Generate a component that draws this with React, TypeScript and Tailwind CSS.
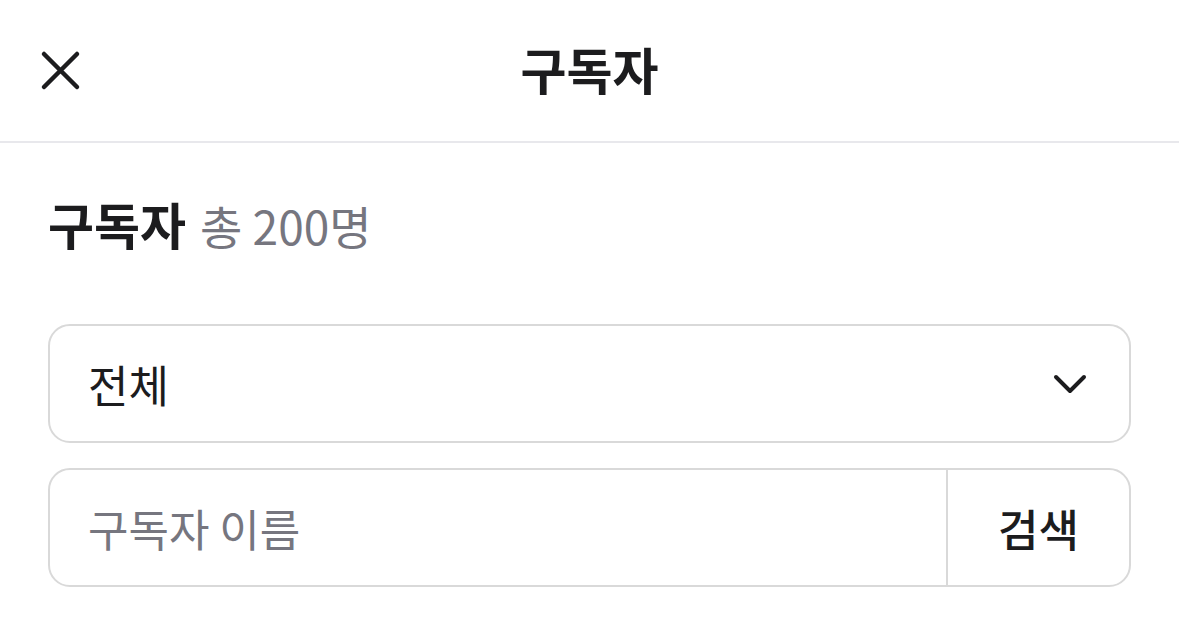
export default function App() {
  return (
    <div
      className="w-[1179px] h-[641px] bg-white text-[#1c1c1e]"
      style={{ fontFamily: '"Noto Sans CJK KR", "Noto Sans", sans-serif' }}
    >
      <header className="grid grid-cols-[1fr_auto_1fr] items-center h-[143px] border-b-[2px] border-[#e8e8ec]">
        <div className="pl-[40px] flex items-center">
          <svg width="41" height="41" viewBox="0 0 41 41" fill="none">
            <path
              d="M4 4L37 37M37 4L4 37"
              stroke="#1c1c1e"
              strokeWidth="4.5"
              strokeLinecap="round"
            />
          </svg>
        </div>
        <h1 className="text-[50px] font-bold leading-none -mt-[6px]">구독자</h1>
        <div />
      </header>

      <div className="px-[48px]">
        <div className="pt-[48px] flex items-baseline gap-[14px] leading-[64px]">
          <span className="text-[50px] font-bold">구독자</span>
          <span className="text-[46px] text-[#76767f]">총 200명</span>
        </div>

        <div className="mt-[67px] h-[119px] flex items-center justify-between rounded-[22px] border-[2px] border-[#d9d9d9] pl-[38px] pr-[42px]">
          <span className="text-[44px] leading-none">전체</span>
          <svg width="34" height="20" viewBox="0 0 34 20" fill="none">
            <path
              d="M3 3L17 17L31 3"
              stroke="#1c1c1e"
              strokeWidth="4"
              strokeLinecap="round"
              strokeLinejoin="round"
            />
          </svg>
        </div>

        <div className="mt-[25px] h-[119px] flex rounded-[22px] border-[2px] border-[#d9d9d9] overflow-hidden">
          <div className="flex-1 flex items-center pl-[38px]">
            <span className="text-[44px] leading-none text-[#76767f]">구독자 이름</span>
          </div>
          <div className="w-[183px] border-l-[2px] border-[#d9d9d9] flex items-center justify-center">
            <span className="text-[44px] font-medium leading-none">검색</span>
          </div>
        </div>
      </div>
    </div>
  );
}
